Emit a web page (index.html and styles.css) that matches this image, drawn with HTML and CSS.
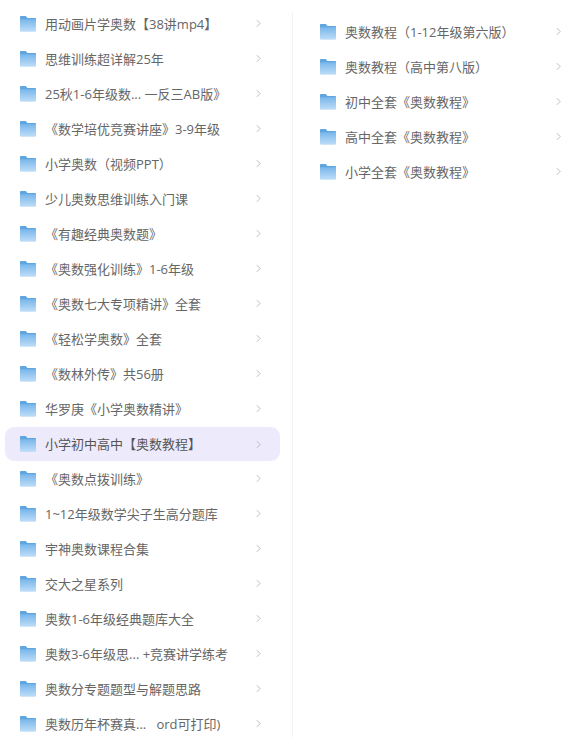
FILE: index.html
```html
<!DOCTYPE html>
<html lang="zh">
<head>
<meta charset="utf-8">
<title>奥数</title>
<link rel="stylesheet" href="styles.css">
</head>
<body>
<svg class="defs" width="0" height="0" aria-hidden="true">
  <defs>
    <linearGradient id="fg" x1="0" y1="0" x2="0" y2="1">
      <stop offset="0" stop-color="#78b6ea"/>
      <stop offset="1" stop-color="#bcdcf8"/>
    </linearGradient>
    <symbol id="folder" viewBox="0 0 16 16">
      <path d="M0 .8C0 .3.3 0 .8 0h5l1.6 2h7.8c.5 0 .8.3.8.8v11.6c0 .5-.3.8-.8.8H.8c-.5 0-.8-.3-.8-.8z" fill="#5fa6e0"/>
      <path d="M0 3.2h16v11.2c0 .5-.3.8-.8.8H.8c-.5 0-.8-.3-.8-.8z" fill="url(#fg)"/>
    </symbol>
    <symbol id="chev" viewBox="0 0 6 10">
      <path d="M1 1l4 4-4 4" fill="none" stroke="#b0b0b0" stroke-width="1"/>
    </symbol>
  </defs>
</svg>
<main class="page">
  <ul class="col col-left">
    <li class="row"><svg class="folder"><use href="#folder"/></svg><span class="label">用动画片学奥数【38讲mp4】</span><svg class="chev"><use href="#chev"/></svg></li>
    <li class="row"><svg class="folder"><use href="#folder"/></svg><span class="label">思维训练超详解25年</span><svg class="chev"><use href="#chev"/></svg></li>
    <li class="row"><svg class="folder"><use href="#folder"/></svg><span class="label">25秋1-6年级数... 一反三AB版》</span><svg class="chev"><use href="#chev"/></svg></li>
    <li class="row"><svg class="folder"><use href="#folder"/></svg><span class="label">《数学培优竞赛讲座》3-9年级</span><svg class="chev"><use href="#chev"/></svg></li>
    <li class="row"><svg class="folder"><use href="#folder"/></svg><span class="label">小学奥数（视频PPT）</span><svg class="chev"><use href="#chev"/></svg></li>
    <li class="row"><svg class="folder"><use href="#folder"/></svg><span class="label">少儿奥数思维训练入门课</span><svg class="chev"><use href="#chev"/></svg></li>
    <li class="row"><svg class="folder"><use href="#folder"/></svg><span class="label">《有趣经典奥数题》</span><svg class="chev"><use href="#chev"/></svg></li>
    <li class="row"><svg class="folder"><use href="#folder"/></svg><span class="label">《奥数强化训练》1-6年级</span><svg class="chev"><use href="#chev"/></svg></li>
    <li class="row"><svg class="folder"><use href="#folder"/></svg><span class="label">《奥数七大专项精讲》全套</span><svg class="chev"><use href="#chev"/></svg></li>
    <li class="row"><svg class="folder"><use href="#folder"/></svg><span class="label">《轻松学奥数》全套</span><svg class="chev"><use href="#chev"/></svg></li>
    <li class="row"><svg class="folder"><use href="#folder"/></svg><span class="label">《数林外传》共56册</span><svg class="chev"><use href="#chev"/></svg></li>
    <li class="row"><svg class="folder"><use href="#folder"/></svg><span class="label">华罗庚《小学奥数精讲》</span><svg class="chev"><use href="#chev"/></svg></li>
    <li class="row row-active"><svg class="folder"><use href="#folder"/></svg><span class="label">小学初中高中【奥数教程】</span><svg class="chev"><use href="#chev"/></svg></li>
    <li class="row"><svg class="folder"><use href="#folder"/></svg><span class="label">《奥数点拨训练》</span><svg class="chev"><use href="#chev"/></svg></li>
    <li class="row"><svg class="folder"><use href="#folder"/></svg><span class="label">1~12年级数学尖子生高分题库</span><svg class="chev"><use href="#chev"/></svg></li>
    <li class="row"><svg class="folder"><use href="#folder"/></svg><span class="label">宇神奥数课程合集</span><svg class="chev"><use href="#chev"/></svg></li>
    <li class="row"><svg class="folder"><use href="#folder"/></svg><span class="label">交大之星系列</span><svg class="chev"><use href="#chev"/></svg></li>
    <li class="row"><svg class="folder"><use href="#folder"/></svg><span class="label">奥数1-6年级经典题库大全</span><svg class="chev"><use href="#chev"/></svg></li>
    <li class="row"><svg class="folder"><use href="#folder"/></svg><span class="label">奥数3-6年级思... +竞赛讲学练考</span><svg class="chev"><use href="#chev"/></svg></li>
    <li class="row"><svg class="folder"><use href="#folder"/></svg><span class="label">奥数分专题题型与解题思路</span><svg class="chev"><use href="#chev"/></svg></li>
    <li class="row"><svg class="folder"><use href="#folder"/></svg><span class="label">奥数历年杯赛真...&nbsp;&nbsp;&nbsp;ord可打印)</span><svg class="chev"><use href="#chev"/></svg></li>
  </ul>
  <ul class="col col-right">
    <li class="row"><svg class="folder"><use href="#folder"/></svg><span class="label">奥数教程（1-12年级第六版）</span><svg class="chev"><use href="#chev"/></svg></li>
    <li class="row"><svg class="folder"><use href="#folder"/></svg><span class="label">奥数教程（高中第八版）</span><svg class="chev"><use href="#chev"/></svg></li>
    <li class="row"><svg class="folder"><use href="#folder"/></svg><span class="label">初中全套《奥数教程》</span><svg class="chev"><use href="#chev"/></svg></li>
    <li class="row"><svg class="folder"><use href="#folder"/></svg><span class="label">高中全套《奥数教程》</span><svg class="chev"><use href="#chev"/></svg></li>
    <li class="row"><svg class="folder"><use href="#folder"/></svg><span class="label">小学全套《奥数教程》</span><svg class="chev"><use href="#chev"/></svg></li>
  </ul>
</main>
</body>
</html>
```
FILE: styles.css
```css
html, body {
  margin: 0;
  padding: 0;
  height: 100%;
  background: #fff;
  overflow: hidden;
}
.defs {
  position: absolute;
}
.page {
  display: flex;
  align-items: flex-start;
  height: 737px;
  overflow: hidden;
  font-family: "Open Sans", "Noto Sans CJK SC", sans-serif;
  font-size: 13px;
  color: #666;
}
.col {
  list-style: none;
  margin: 0;
  display: flex;
  flex-direction: column;
}
.col-left {
  width: 275px;
  padding: 6px 12px 0 5px;
  flex: none;
}
.col-right {
  flex: 1;
  margin-top: 12px;
  padding: 2px 20px 0 12px;
  border-left: 1px solid #f2f2f2;
  height: 725px;
  box-sizing: border-box;
}
.row {
  display: flex;
  align-items: center;
  height: 35px;
  flex: none;
  padding: 0 19px 0 15px;
  box-sizing: border-box;
  border-radius: 9px;
}
.col-right .row {
  padding: 0 0 0 15px;
}
.row-active {
  background: #edebfb;
  color: #555;
  height: 34px;
  margin-top: 1px;
}
.folder {
  width: 16px;
  height: 16px;
  flex: none;
  margin-right: 9px;
}
.label {
  flex: 1;
  min-width: 0;
  white-space: nowrap;
  line-height: 20px;
}
.chev {
  width: 5px;
  height: 9px;
  flex: none;
}
```
